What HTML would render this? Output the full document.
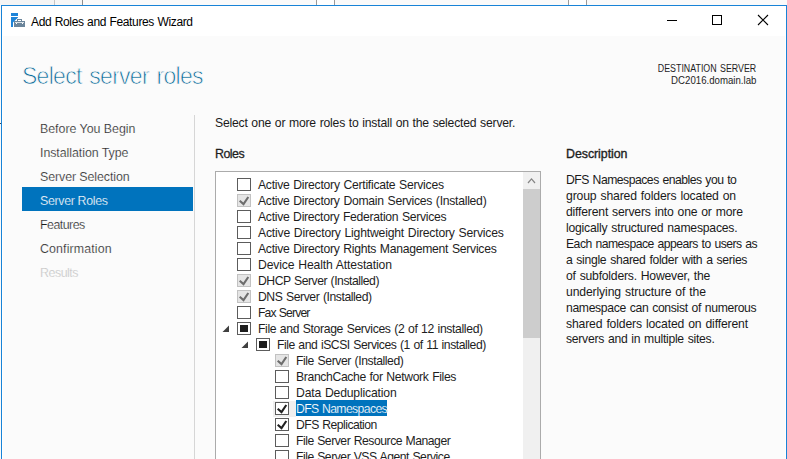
<!DOCTYPE html>
<html><head><meta charset="utf-8">
<style>
*{margin:0;padding:0;box-sizing:border-box}
html,body{width:787px;height:459px;overflow:hidden;background:#fafafa;font-family:"Liberation Sans",sans-serif;color:#1e1e1e}
.a{position:absolute;white-space:nowrap}
.vl{position:absolute;top:0;width:1px;height:5px;background:#a0a0a0}
#win{position:absolute;left:1px;top:5px;width:786px;height:460px;border:1px solid #1883d7;border-bottom:none;background:#fff}
#content{position:absolute;left:3px;top:36px;width:782px;height:430px;background:#fbfbfb}
.t12{font-size:12px;line-height:16px}
.nav{position:absolute;left:40px;font-size:12.4px;line-height:16px;color:#1a1a1a;-webkit-text-stroke:0.22px #fbfbfb}
.cb{position:absolute;width:14px;height:13px;border:1px solid #5c5c5c;background:#fff}
.cb.dis{border-color:#c2c2c2;background:#e5e5e5}
.desc{position:absolute;left:566px;font-size:12.2px;line-height:16px;word-spacing:0.8px;color:#1a1a1a}
.row{position:absolute;font-size:12.2px;line-height:16px;word-spacing:0.6px;color:#1e1e1e}
</style></head><body>
<!-- background strip -->
<div class="a" style="left:0;top:0;width:54px;height:5px;background:#f4f4f4"></div>
<div class="a" style="left:55px;top:0;width:27px;height:5px;background:#f6f6f6"></div>
<div class="a" style="left:317px;top:0;width:17px;height:5px;background:#fff"></div>
<div class="a" style="left:569px;top:0;width:17px;height:5px;background:#fff"></div>
<div class="vl" style="left:54px;background:#c6c6c6"></div>
<div class="vl" style="left:82px;background:#8e8e8e"></div>
<div class="vl" style="left:316px;background:#9a9a9a"></div>
<div class="vl" style="left:334px;background:#9a9a9a"></div>
<div class="vl" style="left:568px;background:#9a9a9a"></div>
<div class="vl" style="left:586px;background:#9a9a9a"></div>

<div class="a" style="left:0;top:123px;width:1px;height:1px;background:#3a4550"></div>
<div id="win"></div>
<div id="content"></div>

<!-- title bar -->
<svg class="a" style="left:11px;top:13px" width="14" height="14" viewBox="0 0 14 14">
  <rect x="0" y="0" width="7" height="3" fill="#1e84d8"/>
  <path d="M0 4H7V4.6L2 9.4V14H0z" fill="#1e84d8"/>
  <rect x="6.5" y="6.5" width="4" height="2" fill="none" stroke="#6b859b" stroke-width="1"/>
  <rect x="3" y="8" width="11" height="6" fill="#6b859b"/>
  <path d="M4 9.2H13V9.9H12V11H11V9.9H6V11H5V9.9H4z" fill="#fff"/>
</svg>
<div class="a" style="left:31px;top:14px;font-size:12px;line-height:16px;word-spacing:0.5px;letter-spacing:-0.36px;color:#000">Add Roles and Features Wizard</div>
<div class="a" style="left:667px;top:20px;width:10px;height:1px;background:#000"></div>
<div class="a" style="left:712px;top:15px;width:10px;height:10px;border:1px solid #000"></div>
<svg class="a" style="left:757px;top:14px" width="12" height="12" viewBox="0 0 12 12"><path d="M1 1L11 11M11 1L1 11" stroke="#000" stroke-width="1.1"/></svg>

<!-- header -->
<div class="a" style="left:22px;top:62px;font-size:23px;line-height:28px;letter-spacing:-0.72px;word-spacing:2px;color:#0a6a98;-webkit-text-stroke:0.75px #fbfbfb">Select server roles</div>
<div class="a" style="right:31px;top:63px;font-size:10px;line-height:12px;word-spacing:1px;transform:scaleX(0.885);transform-origin:100% 50%;color:#1e1e1e">DESTINATION SERVER</div>
<div class="a" style="right:31px;top:75px;font-size:10px;line-height:12px;transform:scaleX(0.965);transform-origin:100% 50%;color:#1e1e1e">DC2016.domain.lab</div>

<!-- nav -->
<div class="a" style="left:194px;top:115px;width:1px;height:344px;background:#d6d6d6"></div>
<div class="a" style="left:22px;top:187px;width:171px;height:24px;background:#0073bd"></div>
<div class="nav" style="top:121px;letter-spacing:-0.027px">Before You Begin</div>
<div class="nav" style="top:145px;letter-spacing:-0.057px">Installation Type</div>
<div class="nav" style="top:169px;letter-spacing:-0.087px">Server Selection</div>
<div class="nav" style="top:193px;color:#fff;-webkit-text-stroke:0.22px #0073bd;letter-spacing:-0.337px">Server Roles</div>
<div class="nav" style="top:217px;letter-spacing:-0.515px">Features</div>
<div class="nav" style="top:241px;letter-spacing:0.128px">Confirmation</div>
<div class="nav" style="top:265px;color:#c4c4c4;letter-spacing:-0.466px">Results</div>

<!-- right -->
<div class="a" style="left:215px;top:115px;font-size:12.2px;line-height:16px;word-spacing:0.6px;letter-spacing:-0.215px;color:#1a1a1a">Select one or more roles to install on the selected server.</div>
<div class="a" style="left:215px;top:146px;font-size:12.4px;line-height:16px;letter-spacing:-0.5px;-webkit-text-stroke:0.28px #1e1e1e">Roles</div>

<div class="a" style="left:215px;top:171px;width:326px;height:300px;border:1px solid #ababab;background:#fff"></div>
<div class="a" style="left:523px;top:172px;width:17px;height:290px;background:#f0f0f0"></div>
<div class="a" style="left:523px;top:189px;width:17px;height:149px;background:#cdcdcd"></div>
<svg class="a" style="left:523px;top:172px" width="17" height="16" viewBox="0 0 17 16"><path d="M5 11L8.5 6.9L12 11" fill="none" stroke="#868686" stroke-width="1.2"/></svg>

<!--ROWS-->
<div class="cb" style="left:237px;top:178px"></div>
<div class="a row" style="left:258px;top:177px;letter-spacing:-0.264px">Active Directory Certificate Services</div>
<div class="cb dis" style="left:237px;top:194px"></div><svg class="a" style="left:237px;top:194px" width="14" height="13" viewBox="0 0 14 13"><path d="M2.7 6.8L6.5 10.1L11.3 3" fill="none" stroke="#6d6d6d" stroke-width="2.1"/></svg>
<div class="a row" style="left:258px;top:193px;letter-spacing:-0.266px">Active Directory Domain Services (Installed)</div>
<div class="cb" style="left:237px;top:210px"></div>
<div class="a row" style="left:258px;top:209px;letter-spacing:-0.293px">Active Directory Federation Services</div>
<div class="cb" style="left:237px;top:226px"></div>
<div class="a row" style="left:258px;top:225px;letter-spacing:-0.199px">Active Directory Lightweight Directory Services</div>
<div class="cb" style="left:237px;top:242px"></div>
<div class="a row" style="left:258px;top:241px;letter-spacing:-0.275px">Active Directory Rights Management Services</div>
<div class="cb" style="left:237px;top:258px"></div>
<div class="a row" style="left:258px;top:257px;letter-spacing:-0.141px">Device Health Attestation</div>
<div class="cb dis" style="left:237px;top:274px"></div><svg class="a" style="left:237px;top:274px" width="14" height="13" viewBox="0 0 14 13"><path d="M2.7 6.8L6.5 10.1L11.3 3" fill="none" stroke="#6d6d6d" stroke-width="2.1"/></svg>
<div class="a row" style="left:258px;top:273px;letter-spacing:-0.466px">DHCP Server (Installed)</div>
<div class="cb dis" style="left:237px;top:290px"></div><svg class="a" style="left:237px;top:290px" width="14" height="13" viewBox="0 0 14 13"><path d="M2.7 6.8L6.5 10.1L11.3 3" fill="none" stroke="#6d6d6d" stroke-width="2.1"/></svg>
<div class="a row" style="left:258px;top:289px;letter-spacing:-0.429px">DNS Server (Installed)</div>
<div class="cb" style="left:237px;top:306px"></div>
<div class="a row" style="left:258px;top:305px;letter-spacing:-0.865px">Fax Server</div>
<div class="cb" style="left:237px;top:322px"></div><div class="a" style="left:240px;top:325px;width:8px;height:7px;background:#1e1e1e"></div>
<svg class="a" style="left:222px;top:325px" width="8" height="8" viewBox="0 0 8 8"><path d="M7 0.5V7H0.5z" fill="#404040"/></svg>
<div class="a row" style="left:258px;top:321px;letter-spacing:-0.352px">File and Storage Services (2 of 12 installed)</div>
<div class="cb" style="left:256px;top:338px"></div><div class="a" style="left:259px;top:341px;width:8px;height:7px;background:#1e1e1e"></div>
<svg class="a" style="left:241px;top:341px" width="8" height="8" viewBox="0 0 8 8"><path d="M7 0.5V7H0.5z" fill="#404040"/></svg>
<div class="a row" style="left:277px;top:337px;letter-spacing:-0.450px">File and iSCSI Services (1 of 11 installed)</div>
<div class="cb dis" style="left:275px;top:354px"></div><svg class="a" style="left:275px;top:354px" width="14" height="13" viewBox="0 0 14 13"><path d="M2.7 6.8L6.5 10.1L11.3 3" fill="none" stroke="#6d6d6d" stroke-width="2.1"/></svg>
<div class="a row" style="left:296px;top:353px;letter-spacing:-0.414px">File Server (Installed)</div>
<div class="cb" style="left:275px;top:370px"></div>
<div class="a row" style="left:296px;top:369px;letter-spacing:-0.357px">BranchCache for Network Files</div>
<div class="cb" style="left:275px;top:386px"></div>
<div class="a row" style="left:296px;top:385px;letter-spacing:-0.169px">Data Deduplication</div>
<div class="a" style="left:273px;top:401px;width:23px;height:16px;background:#efefef"></div>
<div class="cb" style="left:275px;top:402px"></div><svg class="a" style="left:275px;top:402px" width="14" height="13" viewBox="0 0 14 13"><path d="M2.7 6.8L6.5 10.1L11.3 3" fill="none" stroke="#202020" stroke-width="2.1"/></svg>
<div class="a" style="left:296px;top:400px;width:91px;height:16px;background:#0073bd"></div><div class="a row" style="left:296px;top:401px;letter-spacing:-0.600px;color:#fff;-webkit-text-stroke:0.15px #0073bd">DFS Namespaces</div>
<div class="cb" style="left:275px;top:418px"></div><svg class="a" style="left:275px;top:418px" width="14" height="13" viewBox="0 0 14 13"><path d="M2.7 6.8L6.5 10.1L11.3 3" fill="none" stroke="#202020" stroke-width="2.1"/></svg>
<div class="a row" style="left:296px;top:417px;letter-spacing:-0.528px">DFS Replication</div>
<div class="cb" style="left:275px;top:434px"></div>
<div class="a row" style="left:296px;top:433px;letter-spacing:-0.481px">File Server Resource Manager</div>
<div class="cb" style="left:275px;top:450px"></div>
<div class="a row" style="left:296px;top:449px;letter-spacing:-0.482px">File Server VSS Agent Service</div>
<!--/ROWS-->

<div class="a" style="left:566px;top:146px;font-size:12.4px;line-height:16px;letter-spacing:-0.05px;-webkit-text-stroke:0.35px #1e1e1e">Description</div>
<!--DESC-->
<div class="a desc" style="top:172px;letter-spacing:-0.497px">DFS Namespaces enables you to</div>
<div class="a desc" style="top:188px;letter-spacing:-0.150px">group shared folders located on</div>
<div class="a desc" style="top:204px;letter-spacing:-0.193px">different servers into one or more</div>
<div class="a desc" style="top:220px;letter-spacing:-0.219px">logically structured namespaces.</div>
<div class="a desc" style="top:236px;letter-spacing:-0.512px">Each namespace appears to users as</div>
<div class="a desc" style="top:252px;letter-spacing:-0.314px">a single shared folder with a series</div>
<div class="a desc" style="top:268px;letter-spacing:-0.224px">of subfolders. However, the</div>
<div class="a desc" style="top:284px;letter-spacing:-0.127px">underlying structure of the</div>
<div class="a desc" style="top:300px;letter-spacing:-0.347px">namespace can consist of numerous</div>
<div class="a desc" style="top:316px;letter-spacing:-0.153px">shared folders located on different</div>
<div class="a desc" style="top:331px;letter-spacing:-0.281px">servers and in multiple sites.</div>
<!--/DESC-->
</body></html>
